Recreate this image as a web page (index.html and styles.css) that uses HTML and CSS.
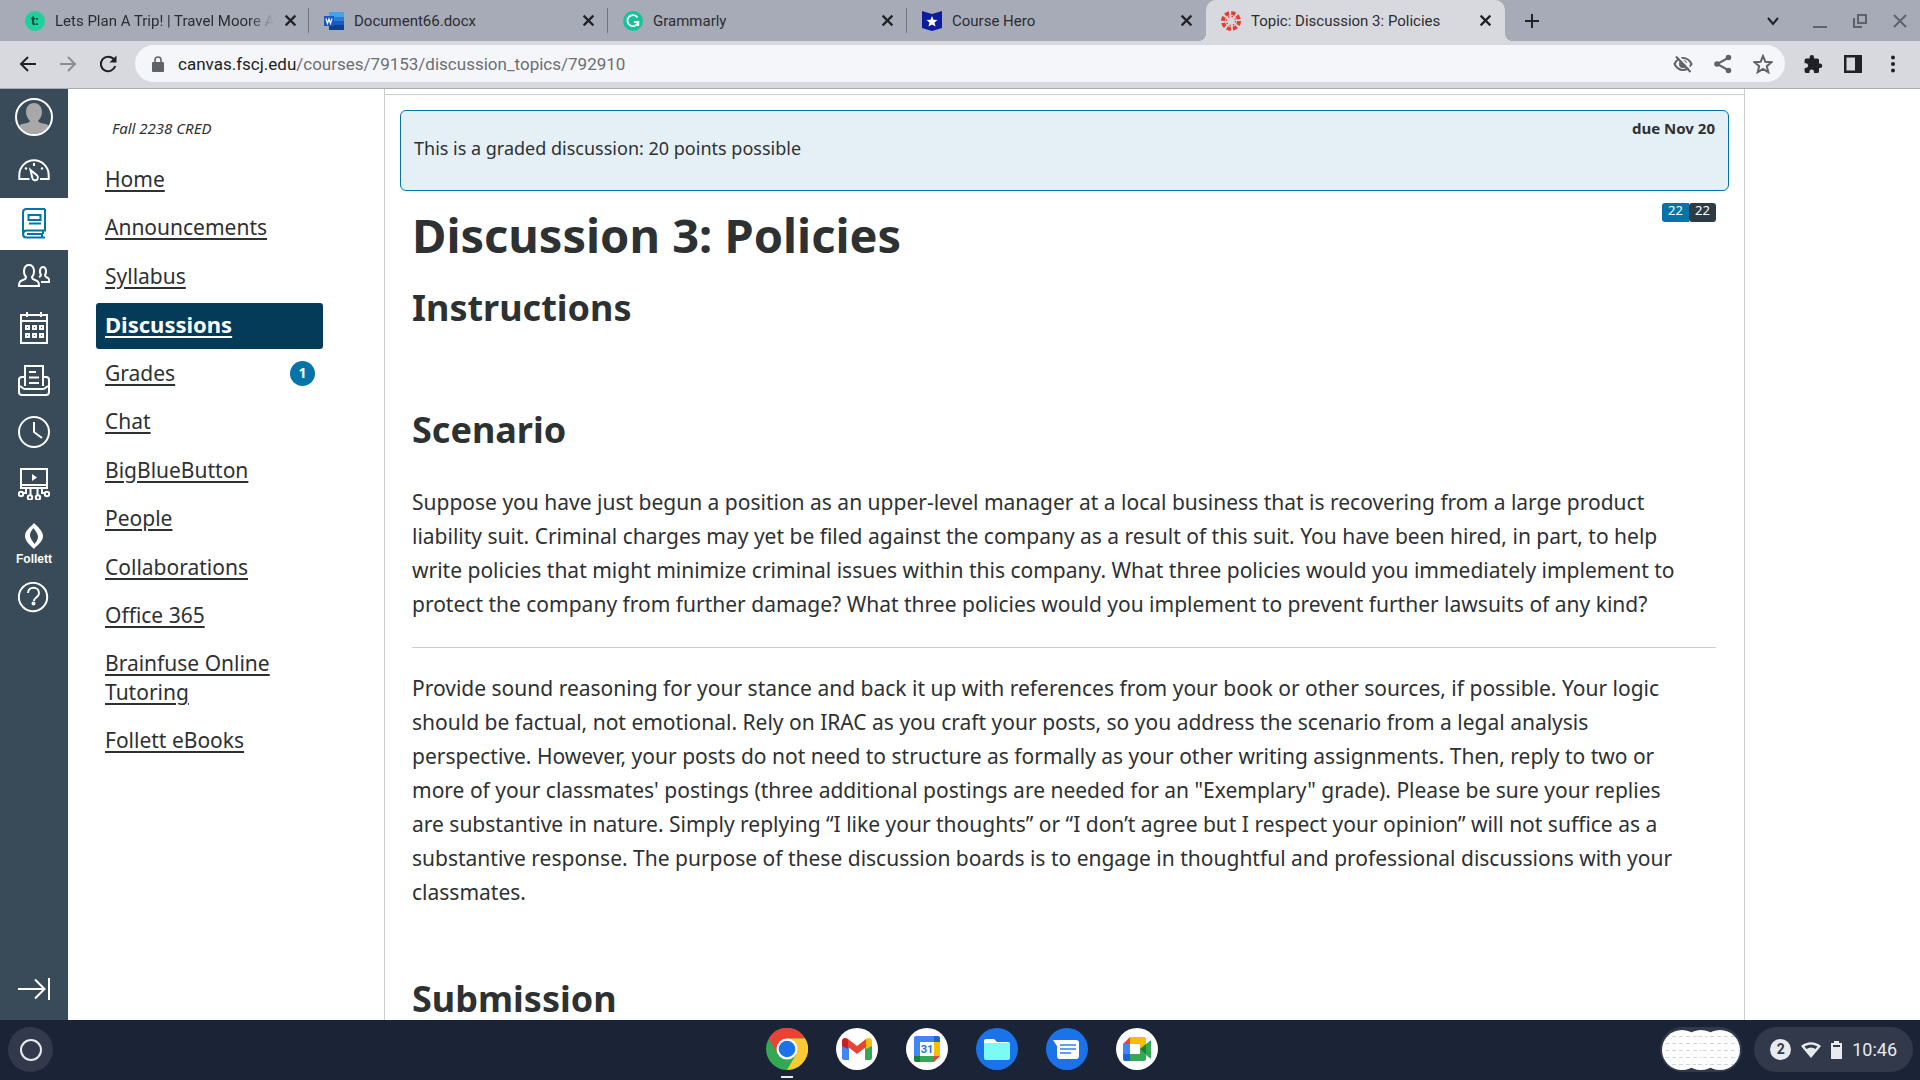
FILE: index.html
```html
<!DOCTYPE html>
<html lang="en">
<head>
    <meta charset="UTF-8">
    <meta name="viewport" content="width=device-width, initial-scale=1.0">
    <title>Topic: Discussion 3: Policies</title>
    <link rel="stylesheet" href="styles.css">
</head>
<body>
<!-- Browser tabs -->
<div class="tab-strip">
    <div class="tab">
        <svg class="favicon" viewBox="0 0 20 20"><circle cx="10" cy="10" r="10" fill="#1fcf9c"/><text x="10" y="14" text-anchor="middle" font-family="Roboto, sans-serif" font-size="12" font-weight="700" fill="#1b3b36">t:</text></svg>
        <span class="tab-title fade">Lets Plan A Trip! | Travel Moore A</span>
        <button class="tab-close" aria-label="Close tab"><svg viewBox="0 0 12 12"><path d="M1.500 1.500l9 9M10.500 1.500l-9 9"/></svg></button>
    </div>
    <div class="tab">
        <svg class="favicon" viewBox="0 0 20 20"><path fill="#41a5ee" d="M5 1h15v5H5z"/><path fill="#2b7cd3" d="M5 6h15v4H5z"/><path fill="#185abd" d="M5 10h15v4H5z"/><path fill="#103f91" d="M5 14h15v5H5z"/><path fill="#185abd" d="M0 5h10v10H0z"/><path d="M2 7.500l1.500 5L5 8l1.500 4.500L8 7.500" fill="none" stroke="#fff" stroke-width="1.200"/></svg>
        <span class="tab-title">Document66.docx</span>
        <button class="tab-close" aria-label="Close tab"><svg viewBox="0 0 12 12"><path d="M1.500 1.500l9 9M10.500 1.500l-9 9"/></svg></button>
    </div>
    <div class="tab">
        <svg class="favicon" viewBox="0 0 20 20"><circle cx="10" cy="10" r="10" fill="#15c39a"/><path d="M14.500 6.500A5.500 5.500 0 1 0 15.300 11H11M15.300 11v4" fill="none" stroke="#fff" stroke-width="1.800"/></svg>
        <span class="tab-title">Grammarly</span>
        <button class="tab-close" aria-label="Close tab"><svg viewBox="0 0 12 12"><path d="M1.500 1.500l9 9M10.500 1.500l-9 9"/></svg></button>
    </div>
    <div class="tab no-line">
        <svg class="favicon" viewBox="0 0 20 20"><path fill="#0b1c9c" d="M0 0l10 3 10-3v17l-10 3-10-3z"/><path fill="#fff" d="M10 5l1.500 3.700 4 .3-3 2.600 1 4L10 13.500l-3.500 2.100 1-4-3-2.600 4-.3z"/></svg>
        <span class="tab-title">Course Hero</span>
        <button class="tab-close" aria-label="Close tab"><svg viewBox="0 0 12 12"><path d="M1.500 1.500l9 9M10.500 1.500l-9 9"/></svg></button>
    </div>
    <div class="tab active">
        <svg class="favicon" viewBox="0 0 20 20"><circle cx="10" cy="10" r="8" fill="none" stroke="#e93d2f" stroke-width="4" stroke-dasharray="4.200 2.080"/><circle cx="10" cy="10" r="4.500" fill="none" stroke="#e93d2f" stroke-width="1.400" stroke-dasharray="1.400 2.130"/></svg>
        <span class="tab-title">Topic: Discussion 3: Policies</span>
        <button class="tab-close" aria-label="Close tab"><svg viewBox="0 0 12 12"><path d="M1.500 1.500l9 9M10.500 1.500l-9 9"/></svg></button>
    </div>
    <button class="new-tab" aria-label="New tab"><svg viewBox="0 0 16 16"><path d="M8 1v14M1 8h14"/></svg></button>
    <div class="window-buttons">
        <button class="dark" aria-label="Search tabs"><svg viewBox="0 0 16 16"><path d="M3 5l5 6 5-6"/></svg></button>
        <button aria-label="Minimize"><svg viewBox="0 0 16 16"><path d="M1 14h14"/></svg></button>
        <button aria-label="Restore"><svg viewBox="0 0 16 16"><path d="M6 2h8v8H6zM2 5v9h8"/></svg></button>
        <button aria-label="Close"><svg viewBox="0 0 16 16"><path d="M2 2l12 12M14 2L2 14"/></svg></button>
    </div>
</div>

<!-- Address bar -->
<div class="toolbar">
    <button class="tool" aria-label="Back"><svg viewBox="0 0 20 20"><path d="M18 10H3M10 3l-7 7 7 7"/></svg></button>
    <button class="tool disabled" aria-label="Forward"><svg viewBox="0 0 20 20"><path d="M2 10h15M10 3l7 7-7 7"/></svg></button>
    <button class="tool" aria-label="Reload"><svg viewBox="0 0 20 20"><path d="M16 5.500A7.300 7.300 0 1 0 17.200 12"/><path d="M18.500 1.500v7h-7z" fill="#202124" stroke="none"/></svg></button>
    <div class="omnibox">
        <svg class="lock" viewBox="0 0 12 16"><path fill="#5f6368" d="M1 6h10a1 1 0 0 1 1 1v8a1 1 0 0 1-1 1H1a1 1 0 0 1-1-1V7a1 1 0 0 1 1-1z"/><path d="M3 7V4a3 3 0 0 1 6 0v3" fill="none" stroke="#5f6368" stroke-width="1.600"/></svg>
        <a class="url" href="#"><b>canvas.fscj.edu</b>/courses/79153/discussion_topics/792910</a>
        <button class="tool grey" aria-label="Third-party cookies blocked"><svg viewBox="0 0 20 20"><path d="M1.500 10c2-4 5-6 8.500-6s6.500 2 8.500 6c-2 4-5 6-8.500 6s-6.500-2-8.500-6z"/><circle cx="10" cy="10" r="3" fill="#5f6368"/><path d="M4.500 1.500L19 16" stroke="#f5f6f9"/><path d="M3 2.500L17.500 18"/></svg></button>
        <button class="tool grey" aria-label="Share"><svg viewBox="0 0 20 20"><path d="M15 4L4 10l11 6"/><g fill="#5f6368"><circle cx="15.500" cy="3.500" r="1.800"/><circle cx="4" cy="10" r="1.800"/><circle cx="15.500" cy="16.500" r="1.800"/></g></svg></button>
        <button class="tool grey" aria-label="Bookmark this tab"><svg viewBox="0 0 20 20"><path d="M10 2l2.300 5.700 6.200.5-4.700 4 1.500 6-5.300-3.300-5.300 3.300 1.500-6-4.700-4 6.200-.5z"/></svg></button>
    </div>
    <button class="tool" aria-label="Extensions"><svg viewBox="0 0 20 20"><path fill="#202124" stroke="none" d="M17 9.500h-1V6a1.600 1.600 0 0 0-1.600-1.600H11V3.200a2.200 2.200 0 0 0-4.400 0v1.200H3.200A1.600 1.600 0 0 0 1.600 6v3.300h1.200a2.300 2.300 0 0 1 0 4.600H1.600v3.400A1.600 1.600 0 0 0 3.200 19h3.200v-1.200a2.300 2.300 0 0 1 4.600 0V19h3.400a1.600 1.600 0 0 0 1.600-1.600V14h1a2.200 2.200 0 0 0 0-4.500z"/></svg></button>
    <button class="tool" aria-label="Side panel"><svg viewBox="0 0 20 20"><path fill="#202124" stroke="none" fill-rule="evenodd" d="M1 1h18v18H1zM3.500 3.500v13H12v-13z"/></svg></button>
    <button class="tool" aria-label="Menu"><svg viewBox="0 0 20 20"><g fill="#202124" stroke="none"><circle cx="10" cy="3.500" r="2"/><circle cx="10" cy="10" r="2"/><circle cx="10" cy="16.500" r="2"/></g></svg></button>
</div>

<div class="page">
    <!-- Global navigation -->
    <nav class="global-nav">
        <a class="nav-item avatar" href="#" aria-label="Account"><svg viewBox="0 0 38 38"><clipPath id="face"><circle cx="19" cy="19" r="17"/></clipPath><g fill="#a8a8a8" clip-path="url(#face)"><path d="M19 5c5 0 8 4 8 9 0 4-2 7-4 9 1 2 4 2 8 3 3 1 5 3 5 12H2c0-9 2-11 5-12 4-1 7-1 8-3-2-2-4-5-4-9 0-5 3-9 8-9z"/></g><circle cx="19" cy="19" r="18" fill="none" stroke="#fff" stroke-width="2"/></svg></a>
        <a class="nav-item" href="#" aria-label="Dashboard"><svg viewBox="0 0 32 32"><path d="M11.500 23H1.300v-4a14.700 14.700 0 0 1 29.400 0v4H22M12.500 14l6.700 5.500c2 2.500 0 5.200-2.700 4.800-1.500-.3-2-1.300-2.200-2.500zM16 7v3M7 12l2 1M25 12l-2 1"/></svg></a>
        <a class="nav-item current" href="#" aria-label="Courses"><svg viewBox="0 0 32 32"><path d="M27 1H8.500C6 1 5 2.500 5 4.500V26c0 2.500 1 3.500 3.500 3.500H27M27 1v21.500H8.500c-4.500 0-4.500 7 0 7M10.500 7h12v5h-12zM11 15.500h12M9 26h15v3.500M25 22.500V26"/></svg></a>
        <a class="nav-item" href="#" aria-label="Groups"><svg viewBox="0 0 32 32"><path d="M1 26c0-4 1-5 4-6 2-.6 3-1 3-3-3-3-3-12 3-12s6 9 3 12c0 2 1 2.400 3 3 3 1 4 2 4 6zM21 17c1.500-.5 2-1 2-2-2-3-1-8 2-8s4 5 2 8c0 1.500.5 2 2 2.500 2 .7 2.300 1.500 2.300 4.500H23"/></svg></a>
        <a class="nav-item" href="#" aria-label="Calendar"><svg viewBox="0 0 32 32"><path d="M3 3h26v28H3zM3 9h26M9 0v5M23 0v5M8 14h3v3H8zM15 14h3v3h-3zM22 14h3v3h-3zM8 22h3v3H8zM15 22h3v3h-3zM22 22h3v3h-3z"/></svg></a>
        <a class="nav-item" href="#" aria-label="Inbox"><svg viewBox="0 0 32 32"><path d="M7 22V2h18v20M7 13H4c-2 0-3 1-3 3v12c0 2 1 3 3 3h24c2 0 3-1 3-3V16c0-2-1-3-3-3h-3M1 22c3 0 3 3 6 3h18c3 0 3-3 6-3M11 8h7M11 13.500h10M11 19h10"/></svg></a>
        <a class="nav-item" href="#" aria-label="History"><svg viewBox="0 0 32 32"><circle cx="16" cy="16" r="15"/><path d="M16 6v10l8 6"/></svg></a>
        <a class="nav-item" href="#" aria-label="Studio"><svg viewBox="0 0 32 32"><path d="M3 1h26v19H3zM3 17h26M8 20v5H5M24 20v5h3M12.500 20v8M19.500 20v8"/><g fill="#394b58"><circle cx="3" cy="26" r="2.200"/><circle cx="29" cy="26" r="2.200"/><circle cx="12" cy="29.500" r="2.200"/><circle cx="20" cy="29.500" r="2.200"/></g><path fill="#fff" stroke="none" d="M14 6l5 3.500-5 3.500z"/></svg></a>
        <a class="nav-item follett" href="#"><svg viewBox="0 0 20 26"><path fill="#fff" stroke="none" fill-rule="evenodd" d="M10 0C8 3 1 7 1 13c0 5 5 9 9 13 2-3 9-7 9-13 0-5-5-9-9-13zM9.500 5c1 2 4.500 5 4.500 9 0 3-2 5-3.500 7C9.500 19 6 16 6 12c0-3 2-5 3.500-7z"/></svg><span>Follett</span></a>
        <a class="nav-item" href="#" aria-label="Help"><svg viewBox="0 0 32 32"><circle cx="15" cy="15" r="14.200"/><path d="M10 11c0-7 11-7 11 0 0 5-5 4-5 8"/><circle cx="15.500" cy="21.500" r="1" fill="#fff"/></svg></a>
        <button class="nav-item expand" aria-label="Expand global navigation"><svg viewBox="0 0 32 32"><path d="M0 16h26M17 6.500l9.500 9.500L17 25.500M31 5v22"/></svg></button>
    </nav>

    <!-- Course menu -->
    <nav class="course-nav">
        <p class="term">Fall 2238 CRED</p>
        <ul>
            <li><a href="#">Home</a></li>
            <li><a href="#">Announcements</a></li>
            <li><a href="#">Syllabus</a></li>
            <li class="selected"><a href="#">Discussions</a></li>
            <li><a href="#">Grades</a><span class="badge">1</span></li>
            <li><a href="#">Chat</a></li>
            <li><a href="#">BigBlueButton</a></li>
            <li><a href="#">People</a></li>
            <li><a href="#">Collaborations</a></li>
            <li><a href="#">Office 365</a></li>
            <li><a href="#">Brainfuse Online Tutoring</a></li>
            <li><a href="#">Follett eBooks</a></li>
        </ul>
    </nav>

    <!-- Discussion topic -->
    <main class="content">
        <div class="topic">
            <div class="graded-info">
                <span>This is a graded discussion: 20 points possible</span>
                <b class="due">due Nov 20</b>
            </div>
            <div class="topic-body">
                <div class="topic-head">
                    <h1>Discussion 3: Policies</h1>
                    <div class="counts"><span class="unread">22</span><span class="total">22</span></div>
                </div>
                <h2>Instructions</h2>
                <p>&nbsp;</p>
                <h2 class="scenario">Scenario</h2>
                <p>
                    Suppose you have just begun a position as an upper-level manager at a local business that is recovering from a large product<br>
                    liability suit. Criminal charges may yet be filed against the company as a result of this suit. You have been hired, in part, to help<br>
                    write policies that might minimize criminal issues within this company. What three policies would you immediately implement to<br>
                    protect the company from further damage? What three policies would you implement to prevent further lawsuits of any kind?
                </p>
                <hr>
                <p>
                    Provide sound reasoning for your stance and back it up with references from your book or other sources, if possible. Your logic<br>
                    should be factual, not emotional. Rely on IRAC as you craft your posts, so you address the scenario from a legal analysis<br>
                    perspective. However, your posts do not need to structure as formally as your other writing assignments. Then, reply to two or<br>
                    more of your classmates' postings (three additional postings are needed for an "Exemplary" grade). Please be sure your replies<br>
                    are substantive in nature. Simply replying “I like your thoughts” or “I don’t agree but I respect your opinion” will not suffice as a<br>
                    substantive response. The purpose of these discussion boards is to engage in thoughtful and professional discussions with your<br>
                    classmates.
                </p>
                <p>&nbsp;</p>
                <h2>Submission</h2>
            </div>
        </div>
    </main>
</div>

<!-- Shelf -->
<div class="shelf">
    <div class="shelf-left"><button class="launcher" aria-label="Launcher"></button></div>
    <div class="apps">
        <button class="app running" aria-label="Chrome"><svg viewBox="0 0 42 42"><circle cx="21" cy="21" r="21" fill="#34a853"/><path fill="#ea4335" d="M2.800 10.500A21 21 0 0 1 39.200 10.500H21L12 26z"/><path fill="#fbc934" d="M39.200 10.500A21 21 0 0 1 21 42l9-15.500-9-16z"/><circle cx="21" cy="21" r="10.500" fill="#fff"/><circle cx="21" cy="21" r="8.300" fill="#1a73e8"/></svg></button>
        <button class="app" aria-label="Gmail"><svg viewBox="0 0 42 42"><circle cx="21" cy="21" r="21" fill="#fff"/><path fill="#4285f4" d="M6 14l7 5v13H8a2 2 0 0 1-2-2z"/><path fill="#34a853" d="M36 14l-7 5v13h5a2 2 0 0 0 2-2z"/><path fill="#ea4335" d="M12 11l9 7 9-7v8l-9 7-9-7z"/><path fill="#c5221f" d="M6 18v-5c0-3 3-4 6-2v10z"/><path fill="#fbbc04" d="M36 18v-5c0-3-3-4-6-2v10z"/></svg></button>
        <button class="app" aria-label="Calendar"><svg viewBox="0 0 42 42"><circle cx="21" cy="21" r="21" fill="#fff"/><path fill="#4285f4" d="M8 10a2 2 0 0 1 2-2h18v6H14v14H8z"/><path fill="#1967d2" d="M28 8h4a2 2 0 0 1 2 2v4h-6z"/><path fill="#fbbc04" d="M28 14h6v14h-6z"/><path fill="#34a853" d="M14 28h14v6H14z"/><path fill="#188038" d="M8 28h6v6h-4a2 2 0 0 1-2-2z"/><path fill="#ea4335" d="M28 28h6l-6 6z"/><text x="21" y="25" text-anchor="middle" font-family="Roboto, sans-serif" font-size="11" font-weight="700" fill="#1a73e8">31</text></svg></button>
        <button class="app" aria-label="Files"><svg viewBox="0 0 42 42"><circle cx="21" cy="21" r="21" fill="#1a73e8"/><path fill="#fff" d="M10 11h8l3 3h11a2 2 0 0 1 2 2v2H8v-5a2 2 0 0 1 2-2z"/><path fill="#7cfbf5" d="M8 15h26v15a2 2 0 0 1-2 2H10a2 2 0 0 1-2-2z"/></svg></button>
        <button class="app" aria-label="Messages"><svg viewBox="0 0 42 42"><circle cx="21" cy="21" r="21" fill="#1a73e8"/><path fill="#fff" d="M7 12h23a3 3 0 0 1 3 3v13a3 3 0 0 1-3 3H14a3 3 0 0 1-3-3V18z"/><path d="M14 17h16M14 21h16M14 25h11" stroke="#669df6" stroke-width="2"/></svg></button>
        <button class="app" aria-label="Meet"><svg viewBox="0 0 42 42"><circle cx="21" cy="21" r="21" fill="#fff"/><path fill="#ea4335" d="M7 16l7-7v7z"/><path fill="#4285f4" d="M7 16h7v10H7z"/><path fill="#1967d2" d="M7 26h7v7H9a2 2 0 0 1-2-2z"/><path fill="#fbbc04" d="M14 9h14a2 2 0 0 1 2 2v10l-6 4v-9H14z"/><path fill="#34a853" d="M14 26h10v-5l11-9v19l-5-4v4a2 2 0 0 1-2 2H14z"/><path fill="#188038" d="M24 21l6-5v10z"/></svg></button>
    </div>
    <div class="shelf-right">
        <button class="tote" aria-label="Recent screen captures"><span></span><span></span><span></span></button>
        <button class="tray">
            <span class="notices">2</span>
            <svg viewBox="0 0 20 16"><path fill="#e8eaed" fill-rule="evenodd" d="M0 4c6-5 14-5 20 0L10 16zM3.500 4.500l2 2.500c3-2 6-2 9 0l2-2.500c-4-2.500-9-2.500-13 0z"/></svg>
            <svg class="battery" viewBox="0 0 11 18"><path fill="#e8eaed" fill-rule="evenodd" d="M3 0h5v2h3v16H0V2h3zM2 4v2h7V4z"/></svg>
            <span>10:46</span>
        </button>
    </div>
</div>
</body>
</html>
```
FILE: styles.css
```css
/* General */
* {
    box-sizing: border-box;
}

body {
    margin: 0;
    height: 100vh;
    display: flex;
    flex-direction: column;
    overflow: hidden;
    background: #fff;
    color: #2d3132;
    font-family: "Noto Sans", sans-serif;
}

button {
    border: none;
    background: none;
    padding: 0;
    font: inherit;
    color: inherit;
    cursor: pointer;
}

svg {
    display: block;
    flex: none;
}

/* Tab strip */
.tab-strip {
    display: flex;
    flex: none;
    height: 41px;
    padding-left: 10px;
    background: #a7abb8;
    color: #2b2c30;
    font-family: Roboto, sans-serif;
    font-size: 15px;
}

.tab {
    position: relative;
    display: flex;
    align-items: center;
    gap: 10px;
    width: 299px;
    padding: 0 13px 0 15px;
}

.tab::after {
    content: '';
    position: absolute;
    right: 0;
    top: 8px;
    width: 1px;
    height: 25px;
    background: #72757f;
}

.tab.no-line::after {
    display: none;
}

.tab.active {
    background: #d8d9df;
    border-radius: 10px 10px 0 0;
}

/* Curved feet under the active tab */
.tab.active::before,
.tab.active::after {
    content: '';
    position: absolute;
    top: auto;
    bottom: 0;
    width: 8px;
    height: 8px;
}

.tab.active::before {
    left: -8px;
    background: radial-gradient(circle at 0 0, #a7abb8 8px, #d8d9df 8px);
}

.tab.active::after {
    right: -8px;
    background: radial-gradient(circle at 100% 0, #a7abb8 8px, #d8d9df 8px);
}

.favicon {
    width: 20px;
    height: 20px;
}

.tab-title {
    flex: 1;
    white-space: nowrap;
}

.tab-title.fade {
    mask-image: linear-gradient(to right, #000 88%, transparent);
}

.tab-close svg {
    width: 13px;
    height: 13px;
}

.tab-close path,
.new-tab path,
.window-buttons path {
    fill: none;
    stroke: #202124;
    stroke-width: 2;
}

.new-tab {
    width: 54px;
}

.new-tab svg {
    width: 16px;
    margin: 0 auto;
}

.window-buttons {
    display: flex;
    margin-left: auto;
}

.window-buttons button {
    width: 40px;
}

.window-buttons button:first-child {
    width: 54px;
}

.window-buttons svg {
    width: 16px;
    margin: 0 auto;
}

.window-buttons path {
    stroke: #5f626b;
}

.window-buttons .dark path {
    stroke: #202124;
}

/* Toolbar */
.toolbar {
    display: flex;
    align-items: center;
    flex: none;
    height: 48px;
    padding: 0 7px 2px 8px;
    background: #d8d9df;
    border-bottom: 1px solid #a9abb1;
    font-family: Roboto, sans-serif;
    font-size: 17px;
}

.tool {
    width: 40px;
}

.tool svg {
    width: 20px;
    height: 20px;
    margin: 0 auto;
    fill: none;
    stroke: #202124;
    stroke-width: 2;
}

.tool.disabled svg {
    stroke: #8b8d94;
}

.tool.grey svg {
    stroke: #5f6368;
}

.omnibox {
    display: flex;
    align-items: center;
    flex: 1;
    height: 37px;
    margin: 0 8px 0 7px;
    padding: 0 2px 0 17px;
    border-radius: 19px;
    background: #f5f6f9;
}

.lock {
    width: 12px;
    height: 16px;
    margin-right: 14px;
}

.url {
    flex: 1;
    color: #6b6e73;
    text-decoration: none;
}

.url b {
    color: #202124;
    font-weight: normal;
}

/* Page */
.page {
    display: flex;
    flex: 1;
    min-height: 0;
    overflow: hidden;
}

.global-nav {
    display: flex;
    flex-direction: column;
    flex: none;
    width: 68px;
    background: #394b58;
    color: #fff;
}

.nav-item {
    display: flex;
    flex-direction: column;
    align-items: center;
    justify-content: center;
    height: 52px;
    color: #fff;
    text-decoration: none;
}

.nav-item svg {
    width: 32px;
    height: 32px;
    fill: none;
    stroke: #fff;
    stroke-width: 2;
}

.nav-item.avatar {
    height: 57px;
    padding-bottom: 2px;
}

.nav-item.avatar svg {
    width: 38px;
    height: 38px;
    stroke: none;
}

.nav-item.current {
    background: #fff;
}

.nav-item.current svg {
    stroke: #0374a8;
}

.nav-item.follett {
    gap: 3px;
    height: 62px;
    padding-top: 6px;
    font-family: "Liberation Sans", Arial, sans-serif;
    font-size: 12px;
    font-weight: bold;
    line-height: 14px;
}

.nav-item.follett svg {
    width: 20px;
    height: 26px;
}

.nav-item.expand {
    margin-top: auto;
    height: 62px;
}

/* Course menu */
.course-nav {
    flex: none;
    width: 316px;
    padding: 30px 61px 0 28px;
}

.term {
    margin: 0 0 20px 16px;
    font-size: 15px;
    font-style: italic;
    line-height: 18px;
}

.course-nav ul {
    display: flex;
    flex-direction: column;
    gap: 2px;
    margin: 0;
    padding: 0;
    list-style: none;
}

.course-nav li {
    display: flex;
    align-items: center;
    justify-content: space-between;
    min-height: 46px;
    padding: 7px 8px 10px 9px;
    border-radius: 3px;
    font-size: 21px;
    line-height: 29px;
}

.course-nav li:nth-child(odd) {
    min-height: 47px;
}

.course-nav a {
    color: inherit;
    text-decoration-thickness: 2px;
    text-underline-offset: 3px;
}

.course-nav .selected {
    background: #033b59;
    color: #fff;
    font-size: 22px;
    font-weight: bold;
}

.badge {
    width: 25px;
    height: 25px;
    border-radius: 50%;
    background: #0374a8;
    color: #fff;
    font-size: 14px;
    font-weight: bold;
    line-height: 24px;
    text-align: center;
}

/* Discussion */
.content {
    flex: 1;
    margin-right: 175px;
    padding-top: 5px;
    border: solid #c7cdd1;
    border-width: 0 1px;
}

.topic {
    padding: 15px;
    border-top: 1px solid #c7cdd1;
}

.graded-info {
    display: flex;
    justify-content: space-between;
    height: 81px;
    padding: 9px 13px;
    border: 1px solid #0374a8;
    border-radius: 6px;
    background: #e5f0f6;
    font-size: 18px;
    line-height: 56px;
}

.due {
    font-size: 15px;
    line-height: 16px;
}

.topic-body {
    padding: 0 13px 0 12px;
}

.topic-head {
    display: flex;
    justify-content: space-between;
    margin-top: 12px;
}

h1 {
    margin: 3px 0 0;
    font-size: 47px;
    line-height: 58px;
}

h2 {
    margin: 22px 0;
    font-size: 36px;
    line-height: 44px;
}

h2.scenario {
    margin-bottom: 33px;
}

.topic-body p {
    margin: 12px 0;
    font-size: 21px;
    line-height: 34px;
}

hr {
    margin: 26px 0 23px;
    border: none;
    border-top: 1px solid #c7cdd1;
}

.counts {
    display: flex;
    height: 19px;
    color: #fff;
    font-size: 13px;
    line-height: 15px;
}

.counts span {
    width: 27px;
    text-align: center;
}

.unread {
    background: #0374a8;
    border-radius: 3px 0 0 3px;
}

.total {
    background: #2d3b45;
    border-radius: 3px;
}

/* Shelf */
.shelf {
    display: flex;
    align-items: center;
    flex: none;
    height: 60px;
    padding: 0 7px 1px 8px;
    background: #1b2437;
    color: #e8eaed;
    font-family: Roboto, sans-serif;
}

.shelf-left,
.shelf-right {
    display: flex;
    flex: 1;
}

.shelf-right {
    justify-content: flex-end;
    gap: 12px;
}

.launcher {
    display: flex;
    align-items: center;
    justify-content: center;
    width: 45px;
    height: 45px;
    border-radius: 50%;
    background: #32394b;
}

.launcher::before {
    content: '';
    width: 18px;
    height: 18px;
    border: 2px solid #e8eaed;
    border-radius: 50%;
}

.apps {
    display: flex;
    gap: 28px;
    padding: 0 0 2px 2px;
}

.app {
    position: relative;
    width: 42px;
    height: 42px;
}

.app.running::after {
    content: '';
    position: absolute;
    left: 15px;
    bottom: -8px;
    width: 12px;
    height: 2px;
    background: #e8eaed;
}

.tote {
    display: flex;
    align-items: center;
    height: 45px;
    padding: 0 2px;
    border-radius: 23px;
    background: #32394b;
}

.tote span {
    width: 40px;
    height: 40px;
    margin-right: -21px;
    border-radius: 50%;
    background:
        repeating-linear-gradient(to right, #fff 0 3px, transparent 3px 7px),
        repeating-linear-gradient(to bottom, #fff 0 6px, #cfd3de 6px 7px);
}

.tote span:first-child {
    position: relative;
    z-index: 1;
}

.tote span:last-child {
    margin-right: 0;
}

.tray {
    display: flex;
    align-items: center;
    gap: 10px;
    height: 45px;
    padding: 0 16px;
    border-radius: 23px;
    background: #32394b;
    font-size: 18px;
}

.tray svg {
    width: 20px;
    height: 16px;
}

.tray .battery {
    width: 11px;
    height: 18px;
}

.notices {
    width: 21px;
    height: 21px;
    border-radius: 50%;
    background: #e8eaed;
    color: #32394b;
    font-size: 14px;
    font-weight: bold;
    line-height: 21px;
}
```
